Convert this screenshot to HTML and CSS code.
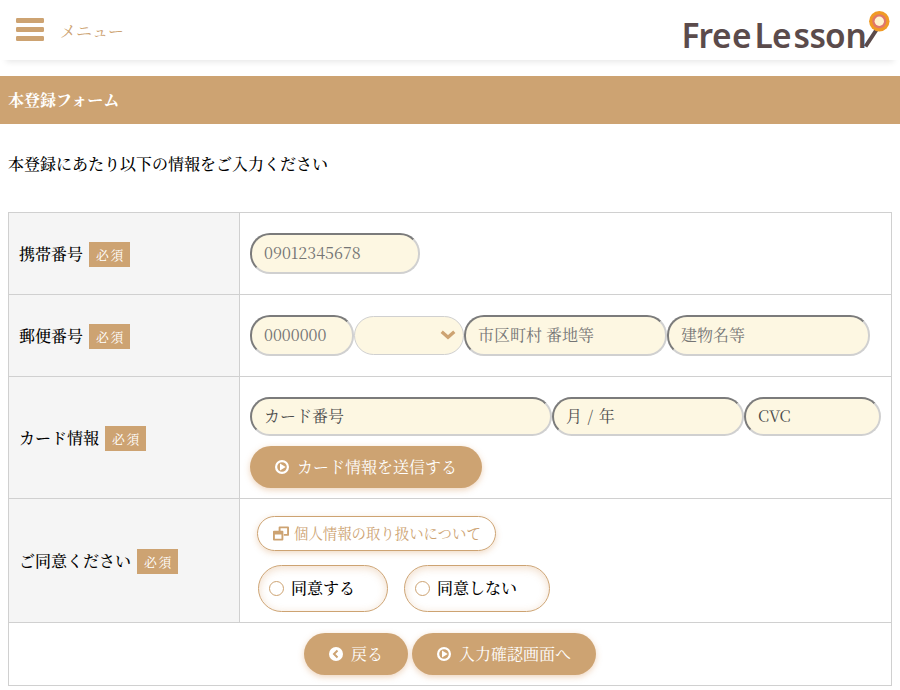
FILE: index.html
```html
<!DOCTYPE html>
<html lang="ja">
<head>
<meta charset="utf-8">
<title>本登録フォーム</title>
<link rel="stylesheet" href="styles.css">
</head>
<body>
<header class="header">
  <a class="menu">
    <svg class="bars" viewBox="0 0 28 24"><rect y="0" width="28" height="5" rx="1.2"/><rect y="9" width="28" height="5" rx="1.2"/><rect y="18" width="28" height="5" rx="1.2"/></svg>
    <span>メニュー</span>
  </a>
  <svg class="logo" viewBox="-6 -8 216 60">
    <text transform="scale(.97 1)" x="-1.5 16 29.9 50.5 73.7 91.700 113.900 130.400 146.400 167.500" y="40">FreeLesson</text>
    <path d="M182.500 38.500L194 21" class="stem"/>
    <circle cx="196.300" cy="13.300" r="10.200" fill="#f09a24"/>
    <circle cx="196.300" cy="13.300" r="7" fill="#e0776b"/>
    <circle cx="196.300" cy="13.300" r="4.700" fill="#fff3cf"/>
  </svg>
</header>
<h1 class="title">本登録フォーム</h1>
<p class="lead">本登録にあたり以下の情報をご入力ください</p>

<form class="table">
  <div class="row phone">
    <div class="label">携帯番号<span class="required">必須</span></div>
    <div class="cell"><input class="field tel" placeholder="09012345678"></div>
  </div>
  <div class="row address">
    <div class="label">郵便番号<span class="required">必須</span></div>
    <div class="cell">
      <input class="field zip" placeholder="0000000">
      <div class="select"><svg viewBox="0 0 16 10"><path d="M1.700 1.700L8 7.300L14.300 1.700"/></svg></div>
      <input class="field town" placeholder="市区町村 番地等">
      <input class="field town" placeholder="建物名等">
    </div>
  </div>
  <div class="row card">
    <div class="label">カード情報<span class="required">必須</span></div>
    <div class="cell stack">
      <div class="line">
        <input class="field low number" placeholder="カード番号">
        <input class="field low expiry" placeholder="月 / 年">
        <input class="field low cvc" placeholder="CVC">
      </div>
      <button type="button" class="button"><svg viewBox="0 0 14 14"><circle class="ring" cx="7" cy="7" r="5.900"/><path d="M5 3.600L10.700 7L5 10.400Z"/></svg>カード情報を送信する</button>
    </div>
  </div>
  <div class="row agree">
    <div class="label">ご同意ください<span class="required">必須</span></div>
    <div class="cell stack">
      <a class="policy"><svg viewBox="0 0 17 15"><path fill-rule="evenodd" d="M7 0H16Q17 0 17 1V9Q17 10 16 10H11.500V8H15V2H8V4.500H6V1Q6 0 7 0ZM1 4.500H10Q11 4.500 11 5.500V14Q11 15 10 15H1Q0 15 0 14V5.500Q0 4.500 1 4.500ZM2 8.500V13H9V8.500Z"/></svg>個人情報の取り扱いについて</a>
      <div class="choices">
        <label class="choice"><i></i>同意する</label>
        <label class="choice"><i></i>同意しない</label>
      </div>
    </div>
  </div>
  <div class="actions">
    <button type="button" class="button"><svg viewBox="0 0 14 14"><circle cx="7" cy="7" r="7"/><path class="chevron" d="M8.500 3.500L5 7L8.500 10.500"/></svg>戻る</button>
    <button type="button" class="button"><svg viewBox="0 0 14 14"><circle class="ring" cx="7" cy="7" r="5.900"/><path d="M5 3.600L10.700 7L5 10.400Z"/></svg>入力確認画面へ</button>
  </div>
</form>
</body>
</html>
```
FILE: styles.css
```css
* { box-sizing: border-box; }
body {
  margin: 0;
  font: 500 16px/24px "Noto Serif CJK JP", "Noto Serif JP", "Noto Sans CJK JP", serif;
  color: #000;
  background: #fff;
}
.header {
  display: flex;
  justify-content: space-between;
  align-items: flex-start;
  height: 60px;
  padding: 0 7px 0 16px;
  box-shadow: 0 8px 6px -6px #e8e8e8;
}
.menu { display: flex; gap: 16px; color: #cda372; font-weight: 400; padding-top: 18px; }
.bars { width: 28px; height: 24px; fill: #cda372; }
.menu span { padding-top: 1px; }
.logo { width: 216px; height: 60px; }
.logo text { font: 600 34.500px "Noto Sans", sans-serif; fill: #5b4b4b; }
.stem { stroke: #5b4b4b; stroke-width: 4; fill: none; }
.title {
  height: 48px;
  margin: 16px 0 0;
  padding: 0 8px;
  background: #cda372;
  color: #fff;
  font-size: 16px;
  font-weight: 700;
  line-height: 48px;
}
.lead { margin: 28px 8px 36px; }
.table { margin: 0 8px; border: 1px solid #d0d0d0; }
.row { display: grid; grid-template-columns: 231px 1fr; border-bottom: 1px solid #d0d0d0; }
.phone, .address { height: 82px; }
.card { height: 122px; }
.agree { height: 124px; }
.label {
  display: flex;
  align-items: center;
  padding-left: 10px;
  background: #f5f5f5;
  border-right: 1px solid #d0d0d0;
}
.required {
  width: 41px;
  height: 25px;
  margin: 2px 0 0 6px;
  padding-left: 7px;
  background: #cda372;
  color: #fff;
  font-size: 12.8px;
  font-weight: 400;
  line-height: 25px;
  letter-spacing: 1.6px;
}
.cell { display: flex; align-items: center; padding-left: 10px; }
.stack { flex-direction: column; align-items: flex-start; }
.line { display: flex; }
.field {
  height: 41px;
  margin: 0;
  padding: 0 12px 2px;
  border: 2px solid;
  border-color: #7b7b7b #d0d0d0 #d0d0d0 #7b7b7b;
  border-radius: 20px;
  background: #fdf7e2;
  font: 400 16px "Noto Serif CJK JP", "Noto Serif JP", serif;
}
.field::placeholder { color: #757575; }
.low { height: 39px; }
.low::placeholder { color: #4c4c4c; }
.tel { width: 170px; }
.zip { width: 104px; }
.town { width: 203px; }
.number { width: 302px; }
.expiry { width: 192px; word-spacing: 1.5px; }
.cvc { width: 137px; }
.select {
  display: flex;
  align-items: center;
  justify-content: flex-end;
  width: 110px;
  height: 39px;
  padding: 0 7px 2px 0;
  border: 1px solid #d0d0d0;
  border-radius: 20px;
  background: #fdf7e2;
}
.select svg { width: 16px; height: 10px; fill: none; stroke: #cda372; stroke-width: 3.3; }
.card .stack { padding-top: 20px; gap: 10px; }
.button {
  display: flex;
  align-items: center;
  gap: 8px;
  height: 42px;
  margin: 0;
  padding: 0 25px 2px;
  border: 0;
  border-radius: 21px;
  background: #cda372;
  color: #fff;
  font: 400 16px "Noto Serif CJK JP", "Noto Serif JP", serif;
  box-shadow: 0 2px 6px rgba(205, 133, 63, .35);
}
.button svg { width: 14px; height: 14px; margin-top: 2px; fill: #fff; }
.button .ring { fill: none; stroke: #fff; stroke-width: 2.2; }
.button .chevron { fill: none; stroke: #cda372; stroke-width: 2; }
.agree .stack { padding-top: 17px; gap: 14px; }
.policy {
  display: flex;
  align-items: center;
  gap: 5px;
  height: 35px;
  width: 239px;
  margin-left: 7px;
  padding: 0 0 2px 15px;
  border: 1px solid #cda372;
  border-radius: 18px;
  color: #cda372;
  font-size: 14.4px;
  font-weight: 400;
  box-shadow: 0 2px 6px rgba(205, 133, 63, .3);
}
.policy svg { width: 16px; height: 15px; margin-top: 2px; fill: #cda372; }
.choices { display: flex; gap: 16px; margin-left: 8px; }
.choice {
  display: flex;
  align-items: center;
  gap: 7px;
  height: 47px;
  padding: 0 32px 2px 10px;
  border: 1px solid #cda372;
  border-radius: 24px;
  box-shadow: inset 0 2px 8px rgba(205, 133, 63, .28);
}
.choice i { width: 15px; height: 15px; margin-top: 2px; border: 1px solid #cda372; border-radius: 50%; }
.actions { display: flex; justify-content: center; gap: 4px; height: 62px; padding-top: 10px; }
```
